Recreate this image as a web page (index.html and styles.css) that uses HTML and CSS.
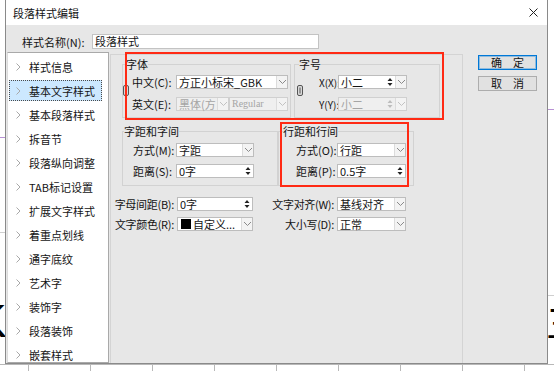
FILE: index.html
```html
<!DOCTYPE html>
<html lang="zh-CN">
<head>
    <meta charset="UTF-8">
    <meta name="viewport" content="width=device-width, initial-scale=1.0">
    <title>段落样式编辑</title>
    <link rel="stylesheet" href="styles.css">
</head>
<body>

<div class="doc">
    <span class="doc-glyph glyph-left">K</span>
    <span class="doc-glyph glyph-right">三</span>
</div>

<div class="dialog">
    <div class="titlebar">
        <span>段落样式编辑</span>
        <svg class="close" width="9" height="9" viewBox="0 0 9 9"><path d="M0.5 0.5 L8.5 8.5 M8.5 0.5 L0.5 8.5" stroke="#222" stroke-width="1"/></svg>
    </div>

    <div class="dialog-body">
        <div class="name-row">
            <span class="name-label">样式名称(N):</span>
            <div class="textbox name-box">段落样式</div>
        </div>

        <div class="main">
            <ul class="nav">
                <li><svg class="chev" width="5" height="8" viewBox="0 0 5 8"><path d="M0.5 0.5 L4 4 L0.5 7.5" fill="none" stroke="#a8a8a8"/></svg>样式信息</li>
                <li class="active"><svg class="chev" width="5" height="8" viewBox="0 0 5 8"><path d="M0.5 0.5 L4 4 L0.5 7.5" fill="none" stroke="#a8a8a8"/></svg>基本文字样式</li>
                <li><svg class="chev" width="5" height="8" viewBox="0 0 5 8"><path d="M0.5 0.5 L4 4 L0.5 7.5" fill="none" stroke="#a8a8a8"/></svg>基本段落样式</li>
                <li><svg class="chev" width="5" height="8" viewBox="0 0 5 8"><path d="M0.5 0.5 L4 4 L0.5 7.5" fill="none" stroke="#a8a8a8"/></svg>拆音节</li>
                <li><svg class="chev" width="5" height="8" viewBox="0 0 5 8"><path d="M0.5 0.5 L4 4 L0.5 7.5" fill="none" stroke="#a8a8a8"/></svg>段落纵向调整</li>
                <li><svg class="chev" width="5" height="8" viewBox="0 0 5 8"><path d="M0.5 0.5 L4 4 L0.5 7.5" fill="none" stroke="#a8a8a8"/></svg>TAB标记设置</li>
                <li><svg class="chev" width="5" height="8" viewBox="0 0 5 8"><path d="M0.5 0.5 L4 4 L0.5 7.5" fill="none" stroke="#a8a8a8"/></svg>扩展文字样式</li>
                <li><svg class="chev" width="5" height="8" viewBox="0 0 5 8"><path d="M0.5 0.5 L4 4 L0.5 7.5" fill="none" stroke="#a8a8a8"/></svg>着重点划线</li>
                <li><svg class="chev" width="5" height="8" viewBox="0 0 5 8"><path d="M0.5 0.5 L4 4 L0.5 7.5" fill="none" stroke="#a8a8a8"/></svg>通字底纹</li>
                <li><svg class="chev" width="5" height="8" viewBox="0 0 5 8"><path d="M0.5 0.5 L4 4 L0.5 7.5" fill="none" stroke="#a8a8a8"/></svg>艺术字</li>
                <li><svg class="chev" width="5" height="8" viewBox="0 0 5 8"><path d="M0.5 0.5 L4 4 L0.5 7.5" fill="none" stroke="#a8a8a8"/></svg>装饰字</li>
                <li><svg class="chev" width="5" height="8" viewBox="0 0 5 8"><path d="M0.5 0.5 L4 4 L0.5 7.5" fill="none" stroke="#a8a8a8"/></svg>段落装饰</li>
                <li><svg class="chev" width="5" height="8" viewBox="0 0 5 8"><path d="M0.5 0.5 L4 4 L0.5 7.5" fill="none" stroke="#a8a8a8"/></svg>嵌套样式</li>
            </ul>

            <div class="panel">
                <div class="group-row top-row">
                    <fieldset class="group font-group">
                        <legend>字体</legend>
                        <div class="fields">
                            <svg class="link" width="6" height="11" viewBox="0 0 6 11"><rect x="0.5" y="0.5" width="5" height="10" rx="1.5" fill="#d8d8d8" stroke="#555"/><path d="M3 2.5 V8.5" stroke="#555"/></svg>
                            <div class="field">
                                <span class="label">中文(C):</span>
                                <div class="combo w-zh"><span class="combo-text">方正小标宋_GBK</span><span class="drop"><svg width="9" height="6" viewBox="0 0 9 6"><path d="M1 1 L4.5 4.5 L8 1" fill="none" stroke="#8a8a8a"/></svg></span></div>
                            </div>
                            <div class="field">
                                <span class="label">英文(E):</span>
                                <div class="combo disabled w-en1"><span class="combo-text">黑体(方</span><span class="drop"><svg width="9" height="6" viewBox="0 0 9 6"><path d="M1 1 L4.5 4.5 L8 1" fill="none" stroke="#c2c2c2"/></svg></span></div>
                                <div class="combo disabled w-en2"><span class="combo-text latin">Regular</span><span class="drop"><svg width="9" height="6" viewBox="0 0 9 6"><path d="M1 1 L4.5 4.5 L8 1" fill="none" stroke="#c2c2c2"/></svg></span></div>
                            </div>
                        </div>
                    </fieldset>

                    <fieldset class="group size-group">
                        <legend>字号</legend>
                        <div class="fields">
                            <svg class="link" width="6" height="11" viewBox="0 0 6 11"><rect x="0.5" y="0.5" width="5" height="10" rx="1.5" fill="#d8d8d8" stroke="#555"/><path d="M3 2.5 V8.5" stroke="#555"/></svg>
                            <div class="field">
                                <span class="label">X(X):</span>
                                <div class="combo w-size"><span class="combo-text">小二</span><span class="spin"><svg width="6" height="10" viewBox="0 0 6 10"><path d="M3 1 L5.5 4 H0.5Z M0.5 6 H5.5 L3 9Z" fill="#222"/></svg></span><span class="drop"><svg width="9" height="6" viewBox="0 0 9 6"><path d="M1 1 L4.5 4.5 L8 1" fill="none" stroke="#8a8a8a"/></svg></span></div>
                            </div>
                            <div class="field">
                                <span class="label">Y(Y):</span>
                                <div class="combo disabled w-size"><span class="combo-text">小二</span><span class="spin"><svg width="6" height="10" viewBox="0 0 6 10"><path d="M3 1 L5.5 4 H0.5Z M0.5 6 H5.5 L3 9Z" fill="#bdbdbd"/></svg></span><span class="drop"><svg width="9" height="6" viewBox="0 0 9 6"><path d="M1 1 L4.5 4.5 L8 1" fill="none" stroke="#c2c2c2"/></svg></span></div>
                            </div>
                        </div>
                    </fieldset>
                </div>

                <div class="group-row mid-row">
                    <fieldset class="group char-group">
                        <legend>字距和字间</legend>
                        <div class="fields">
                            <div class="field">
                                <span class="label">方式(M):</span>
                                <div class="combo w-char"><span class="combo-text">字距</span><span class="drop"><svg width="9" height="6" viewBox="0 0 9 6"><path d="M1 1 L4.5 4.5 L8 1" fill="none" stroke="#8a8a8a"/></svg></span></div>
                            </div>
                            <div class="field">
                                <span class="label">距离(S):</span>
                                <div class="combo w-char"><span class="combo-text">0字</span><span class="spin"><svg width="6" height="10" viewBox="0 0 6 10"><path d="M3 1 L5.5 4 H0.5Z M0.5 6 H5.5 L3 9Z" fill="#222"/></svg></span></div>
                            </div>
                        </div>
                    </fieldset>

                    <fieldset class="group line-group">
                        <legend>行距和行间</legend>
                        <div class="fields">
                            <div class="field">
                                <span class="label">方式(O):</span>
                                <div class="combo w-size"><span class="combo-text">行距</span><span class="drop"><svg width="9" height="6" viewBox="0 0 9 6"><path d="M1 1 L4.5 4.5 L8 1" fill="none" stroke="#8a8a8a"/></svg></span></div>
                            </div>
                            <div class="field">
                                <span class="label">距离(P):</span>
                                <div class="combo w-size"><span class="combo-text">0.5字</span><span class="spin"><svg width="6" height="10" viewBox="0 0 6 10"><path d="M3 1 L5.5 4 H0.5Z M0.5 6 H5.5 L3 9Z" fill="#222"/></svg></span></div>
                            </div>
                        </div>
                    </fieldset>
                </div>

                <div class="extra">
                    <span class="label">字母间距(B):</span>
                    <div class="combo"><span class="combo-text">0字</span><span class="spin"><svg width="6" height="10" viewBox="0 0 6 10"><path d="M3 1 L5.5 4 H0.5Z M0.5 6 H5.5 L3 9Z" fill="#222"/></svg></span></div>
                    <span class="label">文字对齐(W):</span>
                    <div class="combo"><span class="combo-text">基线对齐</span><span class="drop"><svg width="9" height="6" viewBox="0 0 9 6"><path d="M1 1 L4.5 4.5 L8 1" fill="none" stroke="#8a8a8a"/></svg></span></div>

                    <span class="label">文字颜色(R):</span>
                    <div class="combo"><span class="swatch"></span><span class="combo-text">自定义...</span><span class="drop"><svg width="9" height="6" viewBox="0 0 9 6"><path d="M1 1 L4.5 4.5 L8 1" fill="none" stroke="#8a8a8a"/></svg></span></div>
                    <span class="label">大小写(D):</span>
                    <div class="combo"><span class="combo-text">正常</span><span class="drop"><svg width="9" height="6" viewBox="0 0 9 6"><path d="M1 1 L4.5 4.5 L8 1" fill="none" stroke="#8a8a8a"/></svg></span></div>
                </div>
            </div>

            <div class="buttons">
                <button class="btn default">确　定</button>
                <button class="btn">取　消</button>
            </div>
        </div>
    </div>

    <!-- annotation boxes drawn over the dialog -->
    <div class="mark mark-font"></div>
    <div class="mark mark-line"></div>
</div>

</body>
</html>
```

FILE: styles.css
```css
* {
    box-sizing: border-box;
}

body {
    margin: 0;
    width: 554px;
    height: 371px;
    overflow: hidden;
    position: relative;
    background: #fff;
    font-family: "Noto Sans CJK SC", sans-serif;
    font-size: 11px;
    color: #141414;
}

/* document behind the dialog */
.doc {
    width: 554px;
    height: 371px;
    background:
        linear-gradient(#b8b8b8, #b8b8b8) 0 364px / 100% 1px no-repeat,
        linear-gradient(90deg, #b8b8b8 1px, transparent 1px) 152px 364px / 62px 7px repeat-x,
        linear-gradient(#b892d4, #b892d4) 0 137px / 6px 1px no-repeat,
        linear-gradient(#b892d4, #b892d4) 548px 109px / 6px 1px no-repeat,
        linear-gradient(#cfcfcf, #cfcfcf) 0 232px / 6px 1px no-repeat,
        linear-gradient(#cfcfcf, #cfcfcf) 548px 295px / 6px 1px no-repeat;
}

.doc-glyph {
    position: absolute;
    font-family: "Liberation Sans", sans-serif;
    font-size: 46px;
    line-height: 46px;
    color: #000;
}

.glyph-left {
    left: -24px;
    top: 298px;
}

.glyph-right {
    left: 546px;
    top: 298px;
    font-family: "Noto Sans CJK SC", sans-serif;
    font-size: 38px;
}

/* dialog window */
.dialog {
    position: absolute;
    left: 5px;
    top: 0;
    width: 543px;
    height: 364px;
    border: 1px solid #8a8a8a;
    border-top: none;
    background: #e7e7e7;
    display: flex;
    flex-direction: column;
}

.titlebar {
    height: 25px;
    flex: none;
    background: #fff;
    display: flex;
    align-items: center;
    justify-content: space-between;
    padding: 0 9px 0 7px;
}

.dialog-body {
    flex: 1;
    display: flex;
    flex-direction: column;
    min-height: 0;
}

.name-row {
    margin-top: 9px;
    height: 15px;
    display: flex;
    align-items: center;
    padding-left: 16px;
}

.name-label {
    width: 70px;
}

.textbox {
    height: 15px;
    background: #fff;
    border: 1px solid #c3c3c3;
    padding-left: 2px;
    line-height: 13px;
}

.name-box {
    width: 227px;
}

.main {
    flex: 1;
    display: flex;
    margin-top: 3px;
    padding-left: 1px;
    min-height: 0;
}

/* left navigation list */
.nav {
    width: 102px;
    margin: 0;
    padding: 0;
    list-style: none;
    background: #fff;
    border: 1px solid #a9a9a9;
    border-left-color: #dcdcdc;
    overflow: hidden;
}

.nav li {
    display: flex;
    align-items: center;
    height: 21px;
    margin: 3px 6px 0 1px;
    padding-left: 6px;
    border: 1px solid transparent;
    white-space: nowrap;
}

.nav li.active {
    background: #cce8ff;
    border: 1px dotted #4a4a4a;
}

.chev {
    margin-right: 8px;
    flex: none;
}

/* settings panel */
.panel {
    width: 353px;
    margin: 2px 0 0 1px;
    border: 1px solid #d4d4d4;
    border-bottom: none;
    padding: 2px 0 0 11px;
}

.group-row {
    display: flex;
}

.mid-row {
    margin-top: 6px;
}

.group {
    margin: 0;
    min-width: 0;
    border: 1px solid #d2d2d2;
}

.group legend {
    padding: 0;
    height: 14px;
    line-height: 14px;
}

.fields {
    position: relative;
    display: flex;
    flex-direction: column;
}

.field {
    display: flex;
    align-items: center;
    height: 14px;
}

.font-group {
    width: 169px;
    padding: 4px 0 6px 9px;
}

.font-group legend {
    margin-left: -6px;
}

.font-group .fields,
.size-group .fields {
    gap: 8px;
}

.font-group .label {
    width: 44px;
}

.size-group {
    width: 146px;
    margin-left: 3px;
    padding: 4px 0 6px 24px;
}

.size-group legend {
    margin-left: -20px;
}

.size-group .label {
    width: 19px;
    font-size: 10px;
}

.font-group .link {
    position: absolute;
    left: -9px;
    top: 10px;
}

.size-group .link {
    position: absolute;
    left: -22px;
    top: 10px;
}

.char-group {
    width: 156px;
    padding: 5px 0 7px 10px;
}

.char-group legend {
    margin-left: -9px;
}

.char-group .fields,
.line-group .fields {
    gap: 7px;
}

.char-group .label {
    width: 43px;
}

.line-group {
    width: 136px;
    padding: 5px 0 7px 17px;
}

.line-group legend {
    margin-left: -13px;
}

.line-group .label {
    width: 41px;
}

/* combo boxes */
.combo {
    display: flex;
    align-items: center;
    height: 14px;
    background: #fff;
    border: 1px solid #bdbdbd;
}

.combo.disabled {
    background: #efefef;
    border-color: #d0d0d0;
    color: #a5a5a5;
}

.combo-text {
    flex: 1;
    min-width: 0;
    padding-left: 2px;
    line-height: 12px;
    white-space: nowrap;
}

.latin {
    font-family: "Liberation Serif", serif;
    font-size: 10px;
}

.drop {
    width: 11px;
    height: 12px;
    flex: none;
    display: flex;
    align-items: center;
    justify-content: center;
    border-left: 1px solid #dcdcdc;
    background: #f3f3f3;
}

.spin {
    width: 8px;
    height: 12px;
    flex: none;
    display: flex;
    align-items: center;
    justify-content: center;
    margin-right: 1px;
}

.swatch {
    width: 10px;
    height: 10px;
    margin-left: 3px;
    background: #000;
    flex: none;
}

.w-zh {
    width: 112px;
}

.w-en1 {
    width: 53px;
}

.w-en2 {
    width: 59px;
}

.w-size {
    width: 69px;
}

.w-char {
    width: 78px;
}

/* lower settings */
.extra {
    display: grid;
    grid-template-columns: 58px 76px 84px 69px;
    grid-auto-rows: 14px;
    row-gap: 6px;
    margin: 11px 0 0 -3px;
    align-items: center;
}

.extra .label {
    display: flex;
    justify-content: flex-end;
    padding-right: 3px;
    letter-spacing: -0.3px;
}

.label {
    white-space: nowrap;
    flex: none;
}

/* buttons */
.buttons {
    width: 59px;
    margin: 3px 0 0 15px;
    display: flex;
    flex-direction: column;
    gap: 6px;
}

.btn {
    height: 15px;
    padding: 0;
    font-family: "Noto Sans CJK SC", sans-serif;
    font-size: 11px;
    line-height: 13px;
    color: #141414;
    background: #e1e1e1;
    border: 1px solid #adadad;
}

.btn.default {
    border-color: #0078d7;
    box-shadow: inset 0 0 0 1px rgba(0, 120, 215, 0.35);
}

/* red annotation boxes */
.mark {
    position: absolute;
    border: 2px solid #ff2a14;
}

.mark-font {
    left: 119px;
    top: 52px;
    width: 319px;
    height: 68px;
}

.mark-line {
    left: 274px;
    top: 122px;
    width: 129px;
    height: 65px;
}
```
